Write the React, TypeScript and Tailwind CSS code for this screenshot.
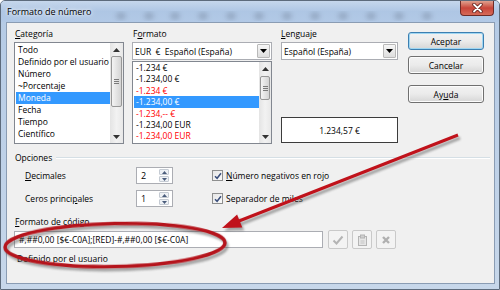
import React from "react";

const font = "font-['Open_Sans','Noto_Sans',sans-serif] text-[8.5px] leading-[11px] text-black";

function Acc({ children }: { children: React.ReactNode }) {
  return <span className="underline underline-offset-[1px]">{children}</span>;
}

function Tri({ down = true, color = "#000" }: { down?: boolean; color?: string }) {
  return (
    <svg width="7" height="4" viewBox="0 0 7 4">
      <path d={down ? "M0 0h7L3.5 4z" : "M0 4h7L3.5 0z"} fill={color} />
    </svg>
  );
}

function ScrollBar({ thumbTop, thumbH, w }: { thumbTop: number; thumbH: number; w: string }) {
  return (
    <div className={`${w} flex flex-col bg-gradient-to-r from-[#e4e4e4] via-[#f2f2f2] to-[#e8e8e8]`}>
      <div className="h-[13px] flex items-center justify-center shrink-0">
        <Tri down={false} color="#333" />
      </div>
      <div className="flex-1 flex flex-col">
        <div style={{ height: thumbTop }} />
        <div
          className="mx-[1px] rounded-[2px] border border-[#979797] bg-gradient-to-r from-[#f4f4f4] to-[#d4d4d4] flex flex-col items-center justify-center gap-[1px]"
          style={{ height: thumbH }}
        >
          <div className="w-[5px] h-px bg-[#7a7a7a]" />
          <div className="w-[5px] h-px bg-[#7a7a7a]" />
          <div className="w-[5px] h-px bg-[#7a7a7a]" />
        </div>
      </div>
      <div className="h-[13px] flex items-center justify-center shrink-0">
        <Tri color="#333" />
      </div>
    </div>
  );
}

function Combo({ text }: { text: string }) {
  return (
    <div className="h-[18px] border border-[#abadb3] bg-white flex items-center">
      <span className="flex-1 pl-[2px] whitespace-pre">{text}</span>
      <div className="w-[13px] h-[14px] mr-[1px] border border-[#b9b9b9] rounded-[1px] bg-gradient-to-b from-[#f6f6f6] to-[#dedede] flex items-center justify-center">
        <Tri />
      </div>
    </div>
  );
}

function Button({ children, primary = false }: { children: React.ReactNode; primary?: boolean }) {
  return (
    <div
      className={`h-[18px] rounded-[3px] border flex items-center justify-center bg-gradient-to-b from-[#f2f2f2] via-[#ebebeb] to-[#d6d6d6] ${
        primary ? "border-[#3c7fb1] shadow-[inset_0_0_0_1px_#9fd6f2]" : "border-[#707070] shadow-[inset_0_0_0_1px_#fcfcfc]"
      }`}
    >
      {children}
    </div>
  );
}

function Spin({ value }: { value: string }) {
  return (
    <div className="w-[37px] h-[17px] border border-[#abadb3] bg-white flex items-center">
      <span className="flex-1 pl-[4px] text-[9px]">{value}</span>
      <div className="w-[10px] mr-[3px] flex flex-col gap-[1px]">
        <div className="h-[6px] border border-[#c5cbd3] rounded-[1px] bg-[#eef1f5] flex items-center justify-center">
          <svg width="5" height="3" viewBox="0 0 5 3"><path d="M0 3h5L2.5 0z" fill="#4b5d7c" /></svg>
        </div>
        <div className="h-[6px] border border-[#c5cbd3] rounded-[1px] bg-[#eef1f5] flex items-center justify-center">
          <svg width="5" height="3" viewBox="0 0 5 3"><path d="M0 0h5L2.5 3z" fill="#4b5d7c" /></svg>
        </div>
      </div>
    </div>
  );
}

function Check({ children }: { children: React.ReactNode }) {
  return (
    <div className="flex items-center gap-[3px]">
      <div className="w-[11px] h-[11px] border border-[#8e8f8f] bg-gradient-to-br from-[#e6e6e6] to-[#fbfbfb] flex items-center justify-center">
        <svg width="8" height="8" viewBox="0 0 8 8">
          <path d="M1 4.2 3.1 6.3 7 1.2" fill="none" stroke="#3b4f7c" strokeWidth="1.5" />
        </svg>
      </div>
      <span>{children}</span>
    </div>
  );
}

function ToolBtn({ children }: { children: React.ReactNode }) {
  return (
    <div className="w-[20px] h-[19px] rounded-[2px] border border-[#c9c9c9] bg-[#f3f3f3] flex items-center justify-center">
      {children}
    </div>
  );
}

const categories = ["Todo", "Definido por el usuario", "Número", "~Porcentaje", "Moneda", "Fecha", "Tiempo", "Científico"];

const formats = [
  { t: "-1.234 €" },
  { t: "-1.234,00 €" },
  { t: "-1.234 €", red: true },
  { t: "-1.234,00 €", sel: true },
  { t: "-1.234,-- €", red: true },
  { t: "-1.234,00 EUR" },
  { t: "-1.234,00 EUR", red: true },
];

export default function App() {
  return (
    <div className={`relative w-[500px] h-[290px] overflow-hidden flex flex-col border border-[#5d6b7c] rounded-t-[5px] bg-gradient-to-b from-[#b4cae5] to-[#c7d7ea] ${font}`}>
      {/* Title bar */}
      <div className="relative h-[21px] flex items-start shrink-0 bg-gradient-to-b from-[#c6d7ec] via-[#aec6e4] to-[#b2c9e6]">
        <svg className="absolute inset-0" width="498" height="21">
          <defs>
            <filter id="blob">
              <feGaussianBlur stdDeviation="2.5" />
            </filter>
          </defs>
          <g filter="url(#blob)" fill="#6f7f95" opacity="0.4">
            {[120, 148, 174, 202, 230, 258, 286, 314, 342, 370, 398, 426].map((x) => (
              <ellipse key={x} cx={x} cy={15} rx={5} ry={4} />
            ))}
          </g>
        </svg>
        <span className="relative pl-[6px] pt-[5px] text-[9px] [text-shadow:0_0_6px_#fff,0_0_3px_#fff]">Formato de número</span>
        <div className="relative ml-auto mr-[5px] w-[34px] h-[15px] rounded-b-[4px] border border-t-0 border-[#6e2b27] bg-gradient-to-b from-[#dea08f] via-[#c8453a] to-[#d66a58] flex items-center justify-center">
          <svg width="11" height="10" viewBox="0 0 11 10">
            <path d="M2 1.5 9 8.5M9 1.5 2 8.5" stroke="#5a1a16" strokeWidth="3.4" strokeLinecap="round" />
            <path d="M2 1.5 9 8.5M9 1.5 2 8.5" stroke="#fff" strokeWidth="1.8" strokeLinecap="round" />
          </svg>
        </div>
      </div>

      {/* Client area */}
      <div className="flex-1 ml-[5px] mr-[4px] mb-[5px] border border-[#8a9cb3] bg-[#f0f0f0] flex flex-col">
        {/* Top row */}
        <div className="flex pt-[5px] pl-[7px]">
          <div className="w-[110px] flex flex-col gap-[3px]">
            <span className="pl-[1px]"><Acc>C</Acc>ategoría</span>
            <div className="h-[102px] border border-[#828790] bg-white flex">
              <div className="flex-1 pt-[1px] pl-[1px]">
                {categories.map((c) => (
                  <div
                    key={c}
                    className={`h-[12px] leading-[12px] pl-[2px] whitespace-nowrap ${c === "Moneda" ? "bg-[#3399ff] text-white" : ""}`}
                  >
                    {c}
                  </div>
                ))}
              </div>
              <ScrollBar w="w-[13px]" thumbTop={0} thumbH={51} />
            </div>
          </div>

          <div className="w-[140px] ml-[8px] flex flex-col gap-[3px]">
            <span className="pl-[1px]">F<Acc>o</Acc>rmato</span>
            <Combo text="EUR  €  Español (España)" />
            <div className="-mt-[2px] h-[83px] border border-[#828790] bg-white flex">
              <div className="flex-1 pl-[1px]">
                {formats.map((f, i) => (
                  <div
                    key={i}
                    className={`h-[11.4px] leading-[11.4px] pl-[2px] whitespace-nowrap ${
                      f.sel ? "bg-[#3399ff] text-white" : f.red ? "text-[#ff0000]" : ""
                    }`}
                  >
                    {f.t}
                  </div>
                ))}
              </div>
              <ScrollBar w="w-[12px]" thumbTop={1} thumbH={24} />
            </div>
          </div>

          <div className="w-[117px] ml-[9px] flex flex-col gap-[3px]">
            <span><Acc>L</Acc>enguaje</span>
            <Combo text="Español (España)" />
            <div className="mt-[54px] h-[26px] border border-[#3c3c3c] bg-white flex items-center justify-center">
              1.234,57 €
            </div>
          </div>

          <div className="w-[76px] ml-[10px] mt-[4px] flex flex-col">
            <Button primary>Aceptar</Button>
            <div className="mt-[6px]">
              <Button>Cancelar</Button>
            </div>
            <div className="mt-[11px]">
              <Button>
                Ay<Acc>u</Acc>da
              </Button>
            </div>
          </div>
        </div>

        {/* Opciones */}
        <div className="mt-[8px] pl-[8px] pr-[4px] flex items-center gap-[4px]">
          <span>Opciones</span>
          <div className="flex-1 h-[2px] border-t border-[#d5dfe5] bg-white" />
        </div>

        <div className="mt-[4px] pl-[18px] flex flex-col gap-[6px]">
          <div className="flex items-center">
            <span className="w-[111px]"><Acc>D</Acc>ecimales</span>
            <Spin value="2" />
            <div className="ml-[39px]">
              <Check>
                <Acc>N</Acc>úmero negativos en rojo
              </Check>
            </div>
          </div>
          <div className="flex items-center">
            <span className="w-[111px]">
              Ceros princi<Acc>p</Acc>ales
            </span>
            <Spin value="1" />
            <div className="ml-[39px]">
              <Check>Separador de miles</Check>
            </div>
          </div>
        </div>

        {/* Formato de código */}
        <div className="mt-[9px] pl-[8px]">
          <Acc>F</Acc>ormato de código
        </div>
        <div className="mt-[3px] pl-[7px] flex items-center">
          <div className="w-[309px] h-[17px] border border-[#abadb3] bg-white flex items-center pl-[4px] whitespace-nowrap">
            #,##0,00 [$€-C0A];[RED]-#,##0,00 [$€-C0A]
          </div>
          <div className="ml-[5px] flex gap-[4px]">
            <ToolBtn>
              <svg width="12" height="10" viewBox="0 0 12 10">
                <path d="M1.5 5.5 4.5 8.5 10.5 1.5" fill="none" stroke="#b4b4b4" strokeWidth="2" />
              </svg>
            </ToolBtn>
            <ToolBtn>
              <svg width="11" height="12" viewBox="0 0 11 12">
                <rect x="1.5" y="2.5" width="8" height="9" fill="#e6e6e6" stroke="#b4b4b4" />
                <rect x="3.5" y="1" width="4" height="3" fill="#d0d0d0" stroke="#b4b4b4" />
                <path d="M3.5 7h4M3.5 9h4" stroke="#c4c4c4" />
              </svg>
            </ToolBtn>
            <ToolBtn>
              <svg width="10" height="10" viewBox="0 0 10 10">
                <path d="M2 2 8 8M8 2 2 8" stroke="#b0b0b0" strokeWidth="2.4" />
              </svg>
            </ToolBtn>
          </div>
        </div>
        <div className="mt-[4px] pl-[10px]">Definido por el usuario</div>
      </div>

      {/* Annotation: ellipse and arrow */}
      <svg className="absolute inset-0 pointer-events-none" width="500" height="290">
        <defs>
          <filter id="shadow" x="-10%" y="-10%" width="120%" height="120%">
            <feGaussianBlur stdDeviation="1.3" />
          </filter>
        </defs>
        <g transform="translate(2 3)" filter="url(#shadow)" opacity="0.45" stroke="#444" fill="none">
          <ellipse cx="114" cy="244" rx="110" ry="21.5" strokeWidth="3.5" transform="rotate(-1.2 114 244)" />
          <line x1="457" y1="134" x2="238" y2="220" strokeWidth="3" />
          <path d="M221 227 L241.3 226.5 L236.1 213.5 Z" fill="#444" stroke="none" />
        </g>
        <ellipse
          cx="114"
          cy="244"
          rx="110"
          ry="21.5"
          fill="none"
          stroke="#b5141c"
          strokeWidth="3.5"
          transform="rotate(-1.2 114 244)"
        />
        <line x1="457" y1="134" x2="238" y2="220" stroke="#c0121b" strokeWidth="3" />
        <path d="M221 227 L241.3 226.5 L236.1 213.5 Z" fill="#c0121b" />
      </svg>
    </div>
  );
}
